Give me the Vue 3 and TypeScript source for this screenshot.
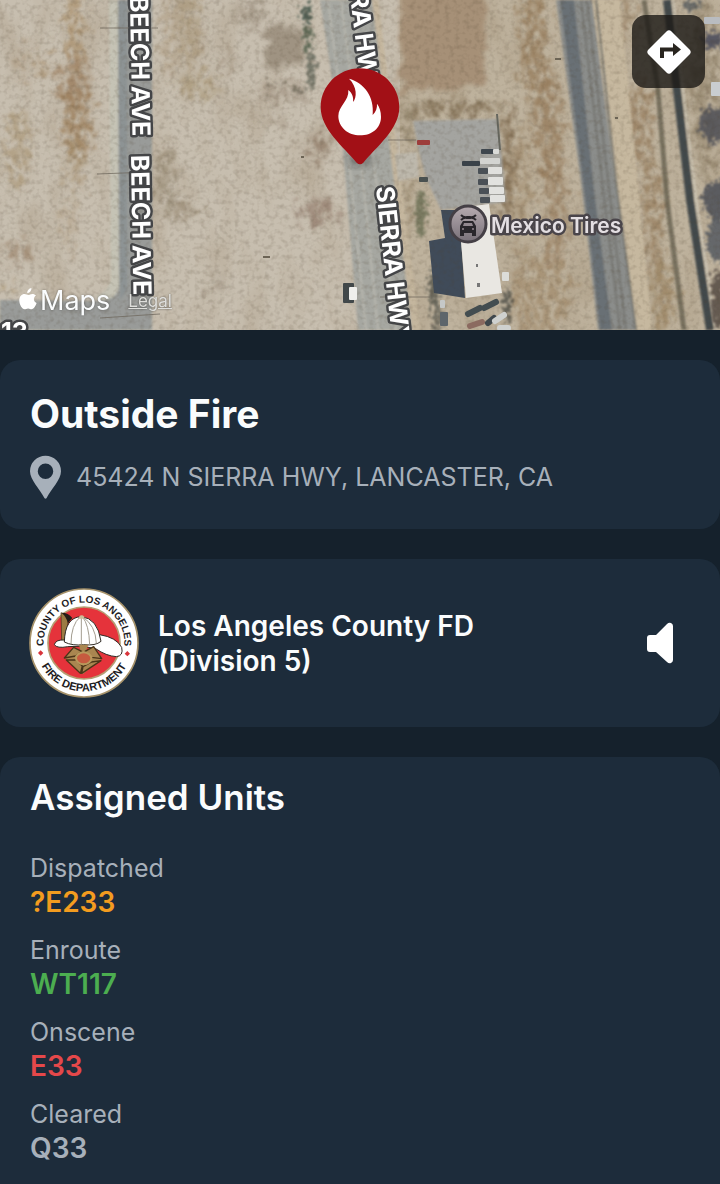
<script setup lang="ts">
interface Patch {
  cx: number
  cy: number
  rx: number
  ry: number
  fill: string
  o: number
}
interface Box {
  x: number
  y: number
  w: number
  h: number
  fill: string
}
interface Group {
  label: string
  unit: string
  tone: string
}

const patches: Patch[] = [
  { cx: 75, cy: 85, rx: 17, ry: 30, fill: '#9c7f60', o: 0.8 },
  { cx: 77, cy: 125, rx: 16, ry: 35, fill: '#9c7f5c', o: 0.8 },
  { cx: 74, cy: 25, rx: 10, ry: 40, fill: '#a88d68', o: 0.7 },
  { cx: 75, cy: 165, rx: 9, ry: 30, fill: '#a08868', o: 0.6 },
  { cx: 18, cy: 150, rx: 13, ry: 40, fill: '#a38d6a', o: 0.6 },
  { cx: 22, cy: 60, rx: 6, ry: 20, fill: '#a68c6c', o: 0.4 },
  { cx: 44, cy: 68, rx: 10, ry: 14, fill: '#a38866', o: 0.6 },
  { cx: 70, cy: 225, rx: 8, ry: 30, fill: '#a89274', o: 0.4 },
  { cx: 17, cy: 252, rx: 13, ry: 12, fill: '#8d7358', o: 0.6 },
  { cx: 8, cy: 287, rx: 9, ry: 5, fill: '#9c8050', o: 0.5 },
  { cx: 190, cy: 25, rx: 14, ry: 45, fill: '#a38e6e', o: 0.55 },
  { cx: 168, cy: 40, rx: 8, ry: 45, fill: '#a38e6e', o: 0.45 },
  { cx: 200, cy: 85, rx: 22, ry: 14, fill: '#a08c68', o: 0.55 },
  { cx: 166, cy: 180, rx: 8, ry: 36, fill: '#8c7f68', o: 0.6 },
  { cx: 186, cy: 213, rx: 24, ry: 6, fill: '#87765e', o: 0.6 },
  { cx: 250, cy: 14, rx: 16, ry: 16, fill: '#8a7b6a', o: 0.5 },
  { cx: 230, cy: 62, rx: 7, ry: 9, fill: '#8f7d68', o: 0.5 },
  { cx: 285, cy: 92, rx: 26, ry: 12, fill: '#938471', o: 0.5 },
  { cx: 272, cy: 118, rx: 14, ry: 9, fill: '#9b8c78', o: 0.4 },
  { cx: 320, cy: 146, rx: 12, ry: 15, fill: '#8b7662', o: 0.7 },
  { cx: 318, cy: 212, rx: 21, ry: 12, fill: '#8b7262', o: 0.65 },
  { cx: 215, cy: 286, rx: 8, ry: 10, fill: '#948674', o: 0.5 },
  { cx: 535, cy: 40, rx: 15, ry: 62, fill: '#937857', o: 0.75 },
  { cx: 548, cy: 125, rx: 14, ry: 60, fill: '#94795a', o: 0.75 },
  { cx: 556, cy: 210, rx: 12, ry: 60, fill: '#94795a', o: 0.7 },
  { cx: 520, cy: 190, rx: 11, ry: 65, fill: '#9a8263', o: 0.6 },
  { cx: 540, cy: 295, rx: 30, ry: 40, fill: '#9a805f', o: 0.6 },
  { cx: 455, cy: 109, rx: 46, ry: 7, fill: '#7e6b50', o: 0.85 },
  { cx: 506, cy: 165, rx: 8, ry: 58, fill: '#7d684c', o: 0.8 },
  { cx: 408, cy: 125, rx: 6, ry: 20, fill: '#7f7156', o: 0.7 },
  { cx: 408, cy: 200, rx: 6, ry: 40, fill: '#8f7d61', o: 0.6 },
  { cx: 624, cy: 15, rx: 8, ry: 30, fill: '#94795a', o: 0.6 },
  { cx: 640, cy: 120, rx: 12, ry: 45, fill: '#917757', o: 0.75 },
  { cx: 652, cy: 215, rx: 10, ry: 60, fill: '#947b5b', o: 0.75 },
  { cx: 664, cy: 295, rx: 10, ry: 42, fill: '#967d5a', o: 0.7 },
  { cx: 705, cy: 90, rx: 16, ry: 90, fill: '#83745b', o: 0.6 },
]

const scrub: Patch[] = [
  { cx: 307, cy: 14, rx: 5, ry: 10, fill: '#47584c', o: 0.9 },
  { cx: 308, cy: 38, rx: 4, ry: 14, fill: '#57624f', o: 0.9 },
  { cx: 311, cy: 70, rx: 4, ry: 20, fill: '#63675a', o: 0.8 },
  { cx: 297, cy: 90, rx: 4, ry: 3, fill: '#5f5a4b', o: 0.8 },
  { cx: 283, cy: 84, rx: 3, ry: 2, fill: '#73695a', o: 0.7 },
  { cx: 268, cy: 84, rx: 3, ry: 2, fill: '#73695a', o: 0.7 },
  { cx: 268, cy: 97, rx: 3, ry: 2, fill: '#73695a', o: 0.7 },
  { cx: 421, cy: 212, rx: 5, ry: 24, fill: '#696d52', o: 0.8 },
  { cx: 714, cy: 40, rx: 11, ry: 9, fill: '#4d4e5c', o: 0.9 },
  { cx: 713, cy: 125, rx: 14, ry: 18, fill: '#4f5057', o: 0.85 },
  { cx: 718, cy: 200, rx: 15, ry: 20, fill: '#4b4f57', o: 0.85 },
  { cx: 719, cy: 240, rx: 12, ry: 22, fill: '#565a61', o: 0.85 },
  { cx: 692, cy: 5, rx: 9, ry: 5, fill: '#53575a', o: 0.8 },
  { cx: 718, cy: 300, rx: 7, ry: 30, fill: '#4e443d', o: 0.8 },
  { cx: 434, cy: 290, rx: 5, ry: 18, fill: '#4c4d46', o: 0.75 },
  { cx: 438, cy: 318, rx: 5, ry: 14, fill: '#57574f', o: 0.7 },
  { cx: 507, cy: 305, rx: 4, ry: 18, fill: '#4d4d46', o: 0.8 },
]

const vehicles: Box[] = [
  { x: 481, y: 149, w: 14, h: 5, fill: '#3f474e' },
  { x: 493, y: 149, w: 6, h: 5, fill: '#dadbd8' },
  { x: 462, y: 161, w: 18, h: 5, fill: '#3a4249' },
  { x: 480, y: 158, w: 20, h: 6, fill: '#d3d4d1' },
  { x: 478, y: 168, w: 10, h: 6, fill: '#4a5056' },
  { x: 488, y: 167, w: 14, h: 7, fill: '#e0e0dd' },
  { x: 478, y: 179, w: 10, h: 6, fill: '#4a5056' },
  { x: 488, y: 177, w: 15, h: 8, fill: '#e2e2df' },
  { x: 479, y: 188, w: 10, h: 6, fill: '#4a5056' },
  { x: 489, y: 187, w: 15, h: 7, fill: '#e2e2df' },
  { x: 480, y: 197, w: 10, h: 6, fill: '#4a5056' },
  { x: 490, y: 195, w: 15, h: 7, fill: '#e2e2df' },
  { x: 417, y: 140, w: 13, h: 5, fill: '#9d3d3b' },
  { x: 419, y: 177, w: 9, h: 5, fill: '#4a5150' },
  { x: 502, y: 272, w: 7, h: 9, fill: '#dcdcd8' },
  { x: 440, y: 312, w: 8, h: 14, fill: '#5d656b' },
  { x: 440, y: 300, w: 5, h: 8, fill: '#c5c8c8' },
  { x: 343, y: 283, w: 11, h: 20, fill: '#41484a' },
  { x: 349, y: 287, w: 8, h: 13, fill: '#efefec' },
  { x: 711, y: 82, w: 12, h: 14, fill: '#c9cdd0' },
  { x: 704, y: 17, w: 16, h: 7, fill: '#b9bcc0' },
]

const groups: Group[] = [
  { label: 'Dispatched', unit: '?E233', tone: 'dispatched' },
  { label: 'Enroute', unit: 'WT117', tone: 'enroute' },
  { label: 'Onscene', unit: 'E33', tone: 'onscene' },
  { label: 'Cleared', unit: 'Q33', tone: 'cleared' },
]
</script>

<template>
  <main class="incident">
    <section class="map" aria-label="Incident map">
      <svg class="imagery" viewBox="0 0 720 330" preserveAspectRatio="xMidYMid slice">
        <defs>
          <filter id="rough" x="-10%" y="-10%" width="120%" height="120%" color-interpolation-filters="sRGB">
            <feGaussianBlur stdDeviation="3" result="b" />
            <feTurbulence type="fractalNoise" baseFrequency="0.09" numOctaves="4" seed="4" result="n" />
            <feDisplacementMap in="b" in2="n" scale="34" xChannelSelector="R" yChannelSelector="G" result="d" />
            <feTurbulence type="fractalNoise" baseFrequency="0.16 0.1" numOctaves="4" seed="21" />
            <feColorMatrix values="0 0 0 0 0  0 0 0 0 0  0 0 0 0 0  3 0 0 0 -.8" result="m" />
            <feComposite in="d" in2="m" operator="in" result="c" />
            <feGaussianBlur in="c" stdDeviation="1" />
          </filter>
          <filter id="field" x="-10%" y="-20%" width="120%" height="140%" color-interpolation-filters="sRGB">
            <feTurbulence type="fractalNoise" baseFrequency="0.06" numOctaves="4" seed="7" result="n" />
            <feDisplacementMap in="SourceGraphic" in2="n" scale="26" xChannelSelector="R" yChannelSelector="G" result="d" />
            <feGaussianBlur in="d" stdDeviation="2" />
          </filter>
          <filter id="leafy" x="-10%" y="-10%" width="120%" height="120%" color-interpolation-filters="sRGB">
            <feTurbulence type="fractalNoise" baseFrequency="0.25" numOctaves="2" seed="9" result="n" />
            <feDisplacementMap in="SourceGraphic" in2="n" scale="20" xChannelSelector="R" yChannelSelector="G" result="d" />
            <feGaussianBlur in="d" stdDeviation="1" />
          </filter>
          <filter id="soil" x="0" y="0" width="100%" height="100%" color-interpolation-filters="sRGB">
            <feTurbulence type="fractalNoise" baseFrequency="0.03 0.015" numOctaves="5" seed="12" />
            <feColorMatrix values="0 0 0 0 .62  0 0 0 0 .55  0 0 0 0 .45  1.8 0 0 0 -.8" />
          </filter>
          <filter id="grain" x="0" y="0" width="100%" height="100%" color-interpolation-filters="sRGB">
            <feTurbulence type="fractalNoise" baseFrequency="0.2" numOctaves="2" seed="3" />
            <feColorMatrix values="0 0 0 0 .3  0 0 0 0 .25  0 0 0 0 .18  0 1 0 0 -.46" />
          </filter>
          <filter id="soft"><feGaussianBlur stdDeviation="1" /></filter>
          <filter id="shade" x="-40%" y="-40%" width="180%" height="180%"><feGaussianBlur stdDeviation="4" /></filter>
          <linearGradient id="poi" x1="0" y1="0" x2="0" y2="1">
            <stop offset="0" stop-color="#b6abb0" />
            <stop offset="1" stop-color="#787078" />
          </linearGradient>
        </defs>

        <rect width="720" height="330" fill="#c7beaf" />
        <rect x="400" width="320" height="330" fill="#beb29d" />
        <rect width="720" height="330" filter="url(#soil)" opacity=".45" />
        <g filter="url(#field)">
          <path d="M399 -20H482L488 30L484 70L494 84L440 88L402 96Z" fill="#a69077" />
          <path d="M264 30H303L306 66H264Z" fill="#9f9382" />
        </g>
        <g filter="url(#rough)">
          <ellipse v-for="(p, i) in patches" :key="i" :cx="p.cx" :cy="p.cy" :rx="p.rx" :ry="p.ry" :fill="p.fill" :opacity="p.o" />
        </g>

        <g filter="url(#soft)">
          <path d="M109 0H119V294Q118 300 104 302L96 296Q110 290 111 278Z" fill="#c5c3b5" />
          <path d="M118 0H152V330H0V300L100 301Q119 299 119 285Z" fill="#999b99" />
          <path d="M118 0H127V290L120 300Z" fill="#868d91" opacity=".6" />
          <path d="M320 0H372L385 80L412 330H358L343 150Z" fill="#a6a7a1" />
          <path d="M328 0L350 170L366 330M341 0L361 160L378 330M352 0L372 150L396 330" fill="none" stroke="#b7b6ae" stroke-width="2" />
          <path d="M372 0H378L420 330H412Z" fill="#c4b69e" />
          <path d="M413 121L498 119L506 202L441 210L426 178L419 152Z" fill="#a4a4a0" />
          <path d="M395 154L417 152L419 177L398 181Z" fill="#bdb8ac" />
          <path d="M592 0H620L652 330H636Z" fill="#c6b89f" />
          <path d="M556 0H592L615 180L636 330H598L582 190Z" fill="#8b8d8b" />
          <path d="M560 0H574L594 190L612 330H600L584 190Z" fill="#697074" />
          <path d="M581 0L602 180L620 330M587 0L608 180L626 330M596 0L617 190L636 330" fill="none" stroke="#75756f" stroke-width="2" />
          <path d="M644 0L658 90L667 200L684 330" fill="none" stroke="#66604f" stroke-width="5" opacity=".8" />
          <path d="M667 0L677 90L690 200L710 330" fill="none" stroke="#42484b" stroke-width="8" />
          <path d="M673 0L683 90L696 200L716 330" fill="none" stroke="#cdc6b6" stroke-width="2" />
        </g>

        <g filter="url(#leafy)">
          <ellipse v-for="(p, i) in scrub" :key="i" :cx="p.cx" :cy="p.cy" :rx="p.rx" :ry="p.ry" :fill="p.fill" :opacity="p.o" />
        </g>
        <path d="M100 28H158M97 174L150 172M100 318L160 314M388 140H416M380 297H430" fill="none" stroke="#6d675c" stroke-width="1" opacity=".75" />
        <path d="M497 114L500 150" stroke="#66675f" stroke-width="2" />
        <path d="M441 210H462V238H461L465 298L434 293L429 241L445 238Z" fill="#404b59" />
        <path d="M476 264h2v3h-2zM477 283h3v4h-3z" fill="#777" />
        <rect width="720" height="330" filter="url(#grain)" opacity=".45" />
        <path d="M458 208L489 204L502 293L466 298Z" fill="#e9e7e2" />
        <path d="M476 264h2v3h-2zM477 283h3v4h-3z" fill="#777" />
        <rect v-for="(v, i) in vehicles" :key="i" :x="v.x" :y="v.y" :width="v.w" :height="v.h" rx="1" :fill="v.fill" />
        <g stroke-width="6" stroke-linecap="round">
          <path d="M468 314L480 308M484 308L496 302" stroke="#434d50" />
          <path d="M470 326L482 322" stroke="#8b6a60" />
          <path d="M488 323L494 318" stroke="#3f474c" />
          <path d="M495 321L504 315M500 328H508" stroke="#cfd1cf" />
        </g>
        <path d="M263 257h7M555 59h6M615 118h3M301 157h3" stroke="#6c6455" stroke-width="2" />

        <g class="street">
          <text transform="translate(130 -4) rotate(89)">BEECH AVE</text>
          <text transform="translate(131 155) rotate(89)">BEECH AVE</text>
          <text transform="translate(343 -61) rotate(83)">SIERRA HWY</text>
          <text transform="translate(376 187) rotate(84)">SIERRA HWY</text>
          <text x="1" y="341">13</text>
        </g>

        <circle cx="468" cy="224" r="18" fill="url(#poi)" stroke="#443f45" stroke-width="3" />
        <g fill="#29262b">
          <path d="M460 226l3-5h10l3 5v10h-4v-3h-8v3h-4z" />
          <path d="M461 215q3 3 6 2h3q3 1 6-2M461 220q3-3 6-2h3q3-1 6 2" fill="none" stroke="#29262b" stroke-width="2" />
          <path d="M464 223h8l1 3h-10z" fill="#938990" />
          <circle cx="463" cy="229" r="1" fill="#938990" />
          <circle cx="473" cy="229" r="1" fill="#938990" />
        </g>
        <text class="place" x="491" y="233">Mexico Tires</text>

        <ellipse cx="360" cy="160" rx="14" ry="6" fill="#333" opacity=".4" filter="url(#shade)" />
        <g transform="translate(300 50) scale(.3333)">
          <path
            d="M180 55C245 55 298 107 298 172C298 238 228 292 190 338Q180 348 170 338C132 292 62 238 62 172C62 107 115 55 180 55Z"
            fill="#a21016"
          />
          <path
            d="M147 86C192 98 224 140 218 195C228 186 232 173 231 161C239 172 243 185 243 200C243 235 215 256 180 256C145 256 115 232 115 198C115 168 148 152 145 120C157 129 161 142 159 156C171 143 172 110 147 86Z"
            fill="#fff"
          />
        </g>
      </svg>

      <div class="credit">
        <svg class="apple" viewBox="0 0 18 22">
          <path
            d="M12.4 0C12.6 2.700 10.700 5 8.300 5C8.100 2.600 10.200.3 12.400 0ZM17 7.600C14 9.400 14.300 13.600 17.600 15C16.800 17.500 14.900 21.200 12.600 21.200C11.200 21.200 10.800 20.400 9.100 20.400C7.400 20.400 6.900 21.200 5.600 21.200C3.100 21.200.3 16.700.3 12.500C.3 8.500 2.800 6.100 5.500 6.100C7.100 6.100 8.200 7 9.300 7C10.300 7 11.600 5.900 13.500 5.900C14.800 5.900 16.200 6.500 17 7.600Z"
            fill="#fff"
          />
        </svg>
        <span class="brand">Maps</span>
        <a class="legal" href="#legal">Legal</a>
      </div>

      <button class="directions" type="button" aria-label="Directions">
        <svg viewBox="0 0 46 46">
          <path d="M20.500 2.500Q23 0 25.500 2.500L43.500 20.500Q46 23 43.500 25.500L25.500 43.500Q23 46 20.500 43.500L2.500 25.500Q0 23 2.500 20.500Z" fill="#fff" />
          <path d="M14 29V18.500H27V14L35 20.500L27 27V22.500H18V29Z" fill="#29251f" />
        </svg>
      </button>
    </section>

    <section class="card summary">
      <h1>Outside Fire</h1>
      <p class="address">
        <svg viewBox="0 0 32 45">
          <path fill-rule="evenodd" d="M16 0A16 16 0 0 1 32 16C32 25 22 34 17 44Q16 45 15 44C10 34 0 25 0 16A16 16 0 0 1 16 0ZM16 8A8 8 0 1 0 16 24A8 8 0 1 0 16 8Z" fill="#a7b0ba" />
        </svg>
        <span>45424 N SIERRA HWY, LANCASTER, CA</span>
      </p>
    </section>

    <section class="card agency">
      <svg class="seal" viewBox="0 0 330 330" role="img" aria-label="County of Los Angeles Fire Department">
        <defs>
          <path id="arc-top" d="M54 213A121 121 0 1 1 276 213" />
          <path id="arc-bottom" d="M20 165A145 145 0 0 0 310 165" />
        </defs>
        <circle cx="165" cy="165" r="162" fill="#fff" stroke="#a6926a" stroke-width="5" />
        <circle cx="165" cy="165" r="108" fill="#e5333b" stroke="#b59d72" stroke-width="5" />
        <text class="ring"><textPath href="#arc-top" startOffset="50%">COUNTY OF LOS ANGELES</textPath></text>
        <text class="ring lower"><textPath href="#arc-bottom" startOffset="50%">FIRE DEPARTMENT</textPath></text>
        <path d="M35 187l8 8-8 8-8-8zM295 189l8 8-8 8-8-8z" fill="#d8343b" />
        <path d="M96 74Q108 76 118 92L110 166L98 160Z" fill="#9b7b43" stroke="#42301a" stroke-width="2" />
        <path d="M98 74Q118 74 130 90L117 106Q112 86 98 74Z" fill="#241d18" />
        <path d="M76 170Q80 154 108 156L212 140Q262 148 278 178Q284 204 262 206Q232 204 200 182Q160 170 116 176Q84 182 76 170Z" fill="#fff" stroke="#2f2a24" stroke-width="3" />
        <path d="M106 162Q108 88 156 86Q206 90 216 160Q200 174 164 170Q130 174 106 162Z" fill="#fff" stroke="#2f2a24" stroke-width="3" />
        <path d="M154 86Q126 110 126 168M157 86V170M160 86Q180 110 182 170M160 86Q200 112 202 166" fill="none" stroke="#a39d90" stroke-width="3" />
        <path d="M150 86q8-8 16 0v6h-16z" fill="#cdbd98" />
        <path d="M150 170h28l-6 16 44 28-54 44-56-50 48-22z" fill="#a98650" />
        <path d="M106 210L134 178L158 190L140 204ZM168 190L194 176L218 212L188 208ZM216 218L158 256L162 236L188 222ZM112 216L140 216L160 234L154 256Z" fill="#a98650" stroke="#4a3518" stroke-width="4" stroke-linejoin="round" />
        <ellipse cx="164" cy="211" rx="23" ry="18" fill="#c65a3f" stroke="#b8995c" stroke-width="6" />
      </svg>
      <h2>Los Angeles County FD<br />(Division 5)</h2>
      <button class="audio" type="button" aria-label="Play audio">
        <svg viewBox="0 0 28 42">
          <path d="M4 13H10L21 2Q23 0 25 1Q27 2 27 4V38Q27 40 25 41Q23 42 21 40L10 30H4Q1 30 1 27V16Q1 13 4 13Z" fill="#fff" />
        </svg>
      </button>
    </section>

    <section class="card units">
      <h2>Assigned Units</h2>
      <dl>
        <div v-for="g in groups" :key="g.label">
          <dt>{{ g.label }}</dt>
          <dd :class="g.tone">{{ g.unit }}</dd>
        </div>
      </dl>
    </section>
  </main>
</template>

<style>
body {
  margin: 0;
  background: #15212c;
}
</style>

<style scoped>
.incident {
  display: flex;
  flex-direction: column;
  gap: 30px;
  min-height: 100vh;
  color: #fafcfd;
  background: #15212c;
  font-family: Inter, "Liberation Sans", sans-serif;
}
h1,
h2,
p,
dl,
dd {
  margin: 0;
}
button {
  display: grid;
  place-items: center;
  padding: 0;
  border: 0;
  background: none;
}
.map {
  position: relative;
  height: 330px;
  overflow: hidden;
}
.imagery {
  display: block;
  width: 100%;
  height: 100%;
}
.street {
  font-size: 25px;
  font-weight: 700;
  fill: #fff;
  stroke: #444547;
  stroke-width: 5px;
  stroke-linejoin: round;
  paint-order: stroke;
}
.place {
  font-size: 21px;
  font-weight: 600;
  fill: #e4dfe3;
  stroke: #4a454a;
  stroke-width: 5px;
  stroke-linejoin: round;
  paint-order: stroke;
}
.credit {
  position: absolute;
  left: 19px;
  bottom: 12px;
  display: flex;
  align-items: center;
}
.apple {
  width: 18px;
  height: 22px;
  margin-right: 3px;
  margin-bottom: 4px;
}
.brand {
  font-size: 27px;
  line-height: 34px;
  text-shadow: 0 0 3px #0006;
}
.legal {
  margin-left: 18px;
  color: #dededb;
  font-size: 17px;
  line-height: 20px;
  text-shadow: 0 0 2px #0008;
}
.directions {
  position: absolute;
  top: 15px;
  right: 15px;
  width: 73px;
  height: 73px;
  border-radius: 14px;
  background: #1d1a16cc;
}
.directions svg {
  width: 46px;
  height: 46px;
}
.card {
  border-radius: 20px;
  background: #1d2c3b;
}
.summary {
  padding: 30px 30px 29px;
}
h1 {
  font-size: 39px;
  font-weight: 700;
  line-height: 48px;
}
.address {
  display: flex;
  align-items: center;
  gap: 15px;
  margin-top: 16px;
  color: #a7b0ba;
  font-size: 25px;
  line-height: 46px;
}
.address svg {
  width: 31px;
  height: 45px;
}
.agency {
  display: flex;
  align-items: center;
  gap: 19px;
  padding: 29px 45px 29px 29px;
}
.seal {
  flex: none;
  width: 110px;
  height: 110px;
}
.ring {
  font-family: "Liberation Sans", sans-serif;
  font-size: 30px;
  font-weight: 700;
  text-anchor: middle;
  fill: #1e1d1f;
}
.lower {
  font-size: 33px;
}
.agency h2 {
  flex: 1;
  padding-top: 2px;
  font-size: 28px;
  font-weight: 600;
  line-height: 35px;
}
.audio svg {
  width: 30px;
  height: 42px;
}
.units {
  flex: 1;
  padding: 18px 30px 17px;
  border-radius: 20px 20px 0 0;
}
.units h2 {
  font-size: 35px;
  font-weight: 600;
  line-height: 44px;
}
dl {
  display: grid;
  gap: 13px;
  margin-top: 32px;
}
dt {
  color: #a7b0ba;
  font-size: 25px;
  line-height: 34px;
}
dd {
  font-size: 28px;
  font-weight: 600;
  line-height: 35px;
}
.dispatched {
  color: #f39c1f;
}
.enroute {
  color: #4cae50;
}
.onscene {
  color: #e5484a;
}
.cleared {
  color: #a7b0ba;
}
</style>
